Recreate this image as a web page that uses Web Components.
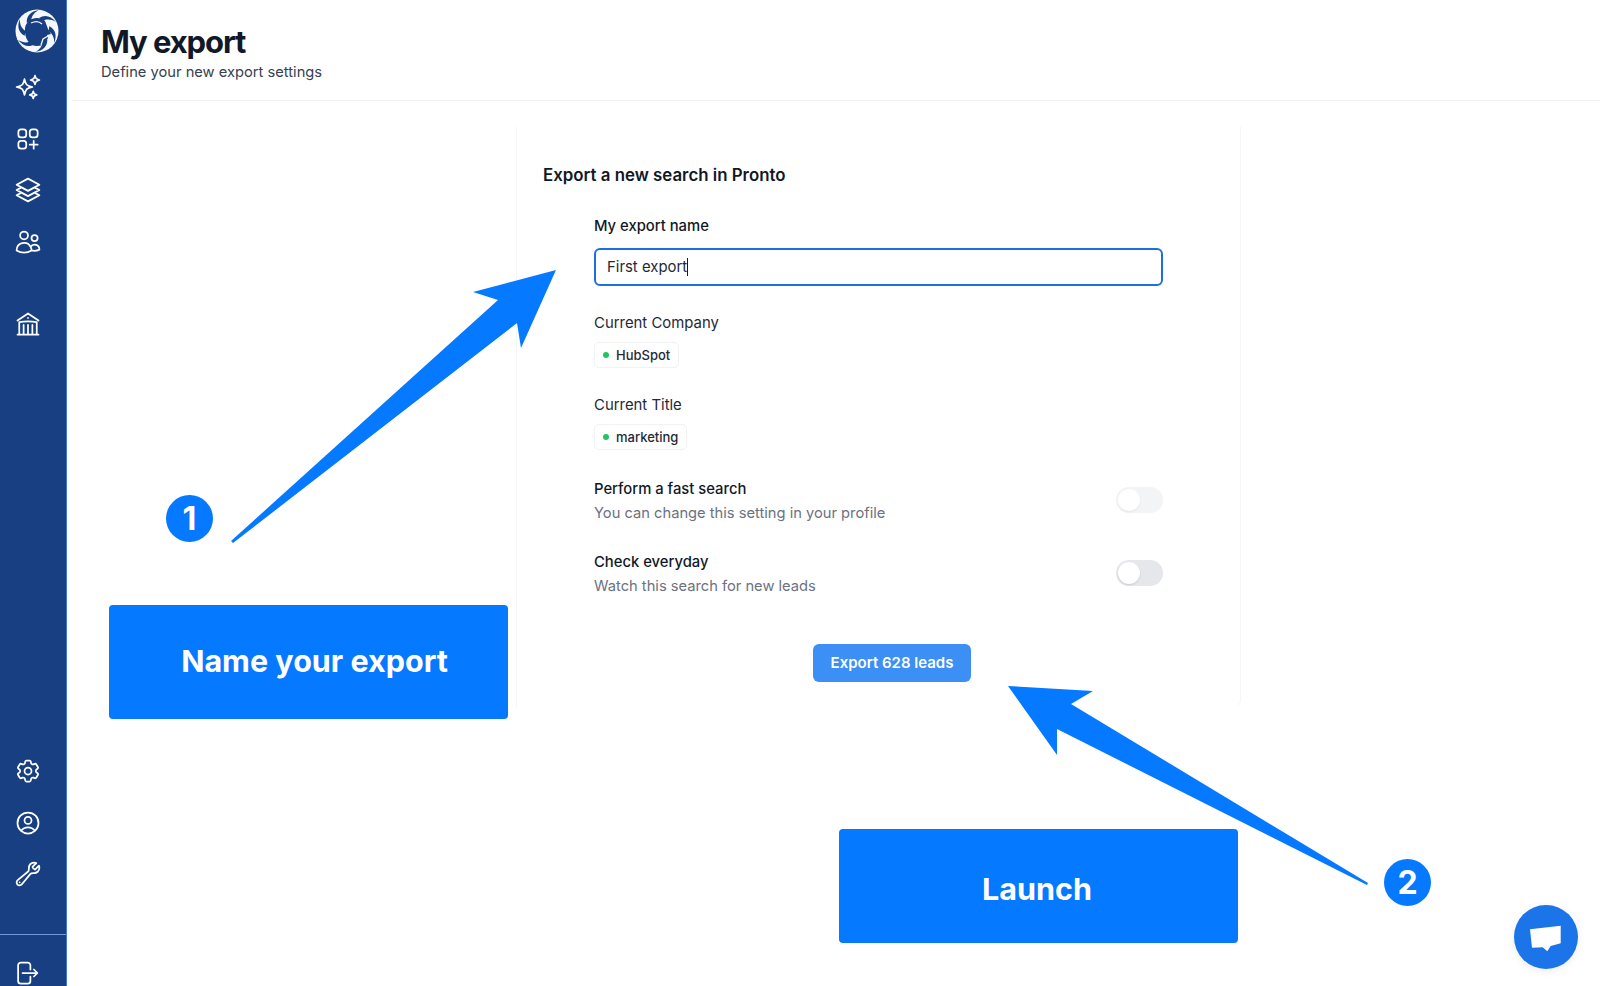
<!DOCTYPE html>
<html lang="en">
<head>
<meta charset="utf-8">
<title>My export</title>
<style>
  html, body { margin: 0; height: 100%; }
  body { font-family: Inter, "Liberation Sans", sans-serif; color: #111827; background: #fff; overflow: hidden; }
</style>
</head>
<body>
<pr-app>
  <pr-sidebar slot="sidebar"></pr-sidebar>
  <pr-header slot="header" heading="My export" sub="Define your new export settings"></pr-header>
  <pr-export-card slot="content" heading="Export a new search in Pronto">
    <pr-field label="My export name" strong><pr-text-input value="First export"></pr-text-input></pr-field>
    <pr-field label="Current Company"><pr-chip>HubSpot</pr-chip></pr-field>
    <pr-field label="Current Title"><pr-chip>marketing</pr-chip></pr-field>
    <pr-switch-row label="Perform a fast search" hint="You can change this setting in your profile" faded></pr-switch-row>
    <pr-switch-row label="Check everyday" hint="Watch this search for new leads"></pr-switch-row>
    <pr-button>Export 628 leads</pr-button>
  </pr-export-card>
</pr-app>

<pr-arrows></pr-arrows>
<pr-callout style="left:109px;top:605px;--dx:6px;--dy:-2.5px">Name your export</pr-callout>
<pr-callout style="left:839px;top:829px;--dx:-1.5px;--dy:2px">Launch</pr-callout>
<pr-badge style="left:166px;top:495px">1</pr-badge>
<pr-badge style="left:1384px;top:859px">2</pr-badge>
<pr-chat></pr-chat>

<script>
const ICONS = {
  sparkles: 'M9.813 15.904L9 18.75l-.813-2.846a4.5 4.5 0 00-3.09-3.09L2.25 12l2.846-.813a4.5 4.5 0 003.09-3.09L9 5.25l.813 2.846a4.5 4.5 0 003.09 3.09L15.75 12l-2.846.813a4.5 4.5 0 00-3.09 3.09zM18.259 8.715L18 9.75l-.259-1.035a3.375 3.375 0 00-2.455-2.456L14.25 6l1.036-.259a3.375 3.375 0 002.455-2.456L18 2.25l.259 1.035a3.375 3.375 0 002.456 2.456L21.75 6l-1.035.259a3.375 3.375 0 00-2.456 2.456zM16.894 20.567L16.5 21.75l-.394-1.183a2.25 2.25 0 00-1.423-1.423L13.5 18.75l1.183-.394a2.25 2.25 0 001.423-1.423l.394-1.183.394 1.183a2.25 2.25 0 001.423 1.423l1.183.394-1.183.394a2.25 2.25 0 00-1.423 1.423z',
  squares: 'M13.5 16.875h3.375m0 0h3.375m-3.375 0V13.5m0 3.375v3.375M6 10.5h2.25a2.25 2.25 0 002.25-2.25V6a2.25 2.25 0 00-2.25-2.25H6A2.25 2.25 0 003.75 6v2.25A2.25 2.25 0 006 10.5zm0 9.75h2.25A2.25 2.25 0 0010.5 18v-2.25a2.25 2.25 0 00-2.25-2.25H6a2.25 2.25 0 00-2.25 2.25V18A2.25 2.25 0 006 20.25zm9.75-9.75H18a2.25 2.25 0 002.25-2.25V6A2.25 2.25 0 0018 3.75h-2.25A2.25 2.25 0 0013.5 6v2.25a2.25 2.25 0 002.25 2.25z',
  stack: 'M6.429 9.75L2.25 12l4.179 2.25m0-4.5l5.571 3 5.571-3m-11.142 0L2.25 7.5 12 2.25l9.75 5.25-4.179 2.25m0 0L21.75 12l-4.179 2.25m0 0l4.179 2.25L12 21.75 2.25 16.5l4.179-2.25m11.142 0l-5.571 3-5.571-3',
  users: 'M15 19.128a9.38 9.38 0 002.625.372 9.337 9.337 0 004.121-.952 4.125 4.125 0 00-7.533-2.493M15 19.128v-.003c0-1.113-.285-2.16-.786-3.07M15 19.128v.106A12.318 12.318 0 018.624 21c-2.331 0-4.512-.645-6.374-1.766l-.001-.109a6.375 6.375 0 0111.964-3.07M12 6.375a3.375 3.375 0 11-6.75 0 3.375 3.375 0 016.75 0zm8.25 2.25a2.625 2.625 0 11-5.25 0 2.625 2.625 0 015.25 0z',
  bank: 'M12 21v-8.25M15.75 21v-8.25M8.25 21v-8.25M3 9l9-6 9 6m-1.5 12V10.332A48.36 48.36 0 0012 9.75c-2.551 0-5.056.2-7.5.582V21M3 21h18M12 6.75h.008v.008H12V6.75z',
  cog: 'M9.594 3.94c.09-.542.56-.94 1.11-.94h2.593c.55 0 1.02.398 1.11.94l.213 1.281c.063.374.313.686.645.87.074.04.147.083.22.127.324.196.72.257 1.075.124l1.217-.456a1.125 1.125 0 011.37.49l1.296 2.247a1.125 1.125 0 01-.26 1.431l-1.003.827c-.293.24-.438.613-.431.992a6.759 6.759 0 010 .255c-.007.378.138.75.43.99l1.005.828c.424.35.534.954.26 1.43l-1.298 2.247a1.125 1.125 0 01-1.369.491l-1.217-.456c-.355-.133-.75-.072-1.076.124a6.57 6.57 0 01-.22.128c-.331.183-.581.495-.644.869l-.213 1.28c-.09.543-.56.941-1.11.941h-2.594c-.55 0-1.02-.398-1.11-.94l-.213-1.281c-.062-.374-.312-.686-.644-.87a6.52 6.52 0 01-.22-.127c-.325-.196-.72-.257-1.076-.124l-1.217.456a1.125 1.125 0 01-1.369-.49l-1.297-2.247a1.125 1.125 0 01.26-1.431l1.004-.827c.292-.24.437-.613.43-.992a6.932 6.932 0 010-.255c.007-.378-.138-.75-.43-.99l-1.004-.828a1.125 1.125 0 01-.26-1.43l1.297-2.247a1.125 1.125 0 011.37-.491l1.216.456c.356.133.751.072 1.076-.124.072-.044.146-.087.22-.128.332-.183.582-.495.644-.869l.214-1.281zM15 12a3 3 0 11-6 0 3 3 0 016 0z',
  account: 'M17.982 18.725A7.488 7.488 0 0012 15.75a7.488 7.488 0 00-5.982 2.975m11.963 0a9 9 0 10-11.963 0m11.963 0A8.966 8.966 0 0112 21a8.966 8.966 0 01-5.982-2.275M15 9.75a3 3 0 11-6 0 3 3 0 016 0z',
  wrench: 'M21.75 6.75a4.5 4.5 0 01-4.884 4.484c-1.076-.091-2.264.071-2.95.904l-7.152 8.684a2.548 2.548 0 11-3.586-3.586l8.684-7.152c.833-.686.995-1.874.904-2.95a4.5 4.5 0 016.336-4.486l-3.276 3.276a3.004 3.004 0 002.25 2.25l3.276-3.276c.278.621.398 1.247.398 1.852zM4.867 19.125h.008v.008h-.008v-.008z',
  logout: 'M15.75 9V5.25A2.25 2.25 0 0013.5 3h-6a2.25 2.25 0 00-2.25 2.25v13.5A2.25 2.25 0 007.5 21h6a2.25 2.25 0 002.25-2.25V15m3 0l3-3m0 0l-3-3m3 3H9'
};

// small helper, every element below has the same shadow setup
class Base extends HTMLElement {
  render(html) {
    if (!this.shadowRoot) this.attachShadow({ mode: 'open' });
    this.shadowRoot.innerHTML = html;
  }
}

class PrApp extends Base {
  connectedCallback() {
    this.render(`
      <style>
        :host { display: flex; height: 986px; }
        main { flex: 1; min-width: 0; display: flex; flex-direction: column; }
      </style>
      <slot name="sidebar"></slot>
      <main>
        <slot name="header"></slot>
        <slot name="content"></slot>
      </main>`);
  }
}

class PrSidebar extends Base {
  connectedCallback() {
    const item = name => `<a><svg viewBox="0 0 24 24" fill="none" stroke="currentColor" stroke-width="1.5" stroke-linecap="round" stroke-linejoin="round"><path d="${ICONS[name]}"/></svg></a>`;
    // aperture blades of the logo, one slit turned six times
    const slits = [0, 60, 120, 180, 240, 300].map(a => `<path transform="rotate(${a} 22 22)" d="M24 9C30 5 36 7 41 13C36 10 31 10 28 12Z"/>`).join('');
    this.render(`
      <style>
        :host { display: flex; flex-direction: column; flex: none; width: 66px; height: 986px; background: #173f82; border-right: 1px solid #3f77d0; color: #fff; overflow: hidden; }
        .logo { display: block; width: 44px; height: 44px; margin: 9px 0 0 15px; flex: none; }
        nav { display: flex; flex-direction: column; gap: 23.5px; padding-left: 14px; }
        .top { margin-top: 20px; }
        .bank { margin-top: 54px; }
        .spacer { flex: 1; }
        .divider { height: 1px; background: #6f9ae0; margin-top: 46px; flex: none; }
        .out { margin-top: 24px; height: 27px; padding-left: 12px; }
        a { display: block; width: 28px; height: 28px; }
        svg { display: block; width: 28px; height: 28px; }
      </style>
      <svg class="logo" viewBox="0 0 44 44">
        <circle cx="22" cy="22" r="21.5" fill="#f4f7fc"/>
        <g fill="#173f82">${slits}
          <path d="M10 19C11 13 16 9 22 9C25 9 28 10 30 12L33 20L36 25L32 26L33 29L29 35C27 36 25 37 22 37C15 37 9 30 10 19Z"/>
        </g>
        <path fill="none" stroke="#f4f7fc" stroke-width="1.3" d="M16 14C20 12 24 12 27 15M33 27L28 30L26 36"/>
      </svg>
      <nav class="top">${item('sparkles')}${item('squares')}${item('stack')}${item('users')}</nav>
      <nav class="bank">${item('bank')}</nav>
      <div class="spacer"></div>
      <nav>${item('cog')}${item('account')}${item('wrench')}</nav>
      <div class="divider"></div>
      <nav class="out">${item('logout')}</nav>`);
  }
}

class PrHeader extends Base {
  connectedCallback() {
    this.render(`
      <style>
        :host { display: block; height: 100px; border-bottom: 1px solid #f0f1f3; margin-left: 5px; padding-left: 29px; }
        h1 { margin: 0; padding-top: 23px; font-size: 31px; line-height: 38px; font-weight: 700; letter-spacing: -1.1px; color: #111827; }
        p { margin: 1px 0 0; font-size: 14.7px; line-height: 20px; color: #374151; }
      </style>
      <h1>${this.getAttribute('heading')}</h1>
      <p>${this.getAttribute('sub')}</p>`);
  }
}

class PrExportCard extends Base {
  connectedCallback() {
    this.render(`
      <style>
        :host { display: block; box-sizing: border-box; width: 725px; height: 581px; margin: 26px 0 0 449px; padding: 37px 77px 0 26px; border-left: 1px solid #f5f6f7; border-right: 1px solid #f5f6f7; border-bottom: 1px solid transparent; border-bottom-right-radius: 8px; }
        h2 { margin: 0; font-size: 16.85px; line-height: 22px; font-weight: 600; color: #111827; }
        .body { display: flex; flex-direction: column; padding-left: 51px; margin-top: 30px; }
      </style>
      <h2>${this.getAttribute('heading')}</h2>
      <div class="body"><slot></slot></div>`);
  }
}

class PrField extends Base {
  connectedCallback() {
    const strong = this.hasAttribute('strong');
    this.render(`
      <style>
        :host { display: flex; flex-direction: column; align-items: flex-start; gap: 11px; margin-bottom: 27px; }
        label { font-size: ${strong ? 14.8 : 14.9}px; line-height: 20px; font-weight: ${strong ? 450 : 400}; color: ${strong ? '#111827' : '#1f2937'}; }
      </style>
      <label>${this.getAttribute('label')}</label>
      <slot></slot>`);
  }
}

class PrTextInput extends Base {
  connectedCallback() {
    this.render(`
      <style>
        :host { display: flex; align-items: center; align-self: stretch; box-sizing: border-box; height: 38px; margin-top: 1px; padding: 0 0 1px 11px; border: 2px solid #1d6fe0; border-radius: 6px; font-size: 14.9px; color: #1f2937; background: #fff; }
        i { display: block; width: 1px; height: 18px; background: #111827; }
      </style>
      <span>${this.getAttribute('value')}</span><i></i>`);
  }
}

class PrChip extends Base {
  connectedCallback() {
    this.render(`
      <style>
        :host { display: inline-flex; align-items: center; gap: 7px; box-sizing: border-box; height: 26px; margin-top: -2px; padding: 0 8px; border: 1px solid #f1f2f4; border-radius: 5px; font-size: 13px; font-weight: 500; color: #1f2937; background: #fff; }
        i { width: 6px; height: 6px; border-radius: 50%; background: #22c55e; }
      </style>
      <i></i><slot></slot>`);
  }
}

class PrSwitchRow extends Base {
  connectedCallback() {
    this.render(`
      <style>
        :host { display: flex; justify-content: space-between; align-items: flex-start; margin-bottom: 29.5px; }
        :host([faded]) { margin-top: 1.5px; }
        b { display: block; font-size: 14.8px; line-height: 20px; font-weight: 450; color: #111827; }
        span { display: block; margin-top: 4px; font-size: 14.7px; line-height: 20px; color: #6b7280; }
        .track { width: 47px; height: 26px; margin-top: 8px; border-radius: 13px; background: #e5e7eb; display: flex; align-items: center; padding: 2px; box-sizing: border-box; }
        .knob { width: 22px; height: 22px; border-radius: 50%; background: #fff; box-shadow: 0 1px 2px rgba(0,0,0,.12); }
        .faded { opacity: .45; }
      </style>
      <div><b>${this.getAttribute('label')}</b><span>${this.getAttribute('hint')}</span></div>
      <div class="track ${this.hasAttribute('faded') ? 'faded' : ''}"><div class="knob"></div></div>`);
  }
}

class PrButton extends Base {
  connectedCallback() {
    this.render(`
      <style>
        :host { display: flex; align-items: center; justify-content: center; align-self: flex-start; width: 158px; height: 38px; margin: 18px 0 0 219px; border-radius: 6px; background: #3b8ff5; color: #fff; font-size: 15px; font-weight: 600; }
      </style>
      <slot></slot>`);
  }
}

class PrCallout extends Base {
  connectedCallback() {
    this.render(`
      <style>
        :host { position: absolute; display: flex; align-items: center; justify-content: center; width: 399px; height: 114px; border-radius: 4px; background: #0579ff; color: #fff; font-size: 30.5px; font-weight: 700; }
        span { transform: translate(var(--dx, 0), var(--dy, 0)); }
      </style>
      <span><slot></slot></span>`);
  }
}

class PrBadge extends Base {
  connectedCallback() {
    this.render(`
      <style>
        :host { position: absolute; display: flex; align-items: center; justify-content: center; width: 47px; height: 47px; border-radius: 50%; background: #0579ff; color: #fff; font-size: 32px; font-weight: 700; }
      </style>
      <slot></slot>`);
  }
}

class PrArrows extends Base {
  connectedCallback() {
    this.render(`
      <style>
        :host { position: absolute; left: 0; top: 0; width: 1600px; height: 986px; pointer-events: none; }
        svg { display: block; }
      </style>
      <svg width="1600" height="986" viewBox="0 0 1600 986">
        <polygon fill="#0579ff" points="556,270 473,292 498,300 231,541 233,543 517,323 521,348"/>
        <polygon fill="#0579ff" points="1008,686 1093,691 1071,704 1368,883 1367,885 1057,729 1057,755"/>
      </svg>`);
  }
}

class PrChat extends Base {
  connectedCallback() {
    this.render(`
      <style>
        :host { position: absolute; left: 1514px; top: 905px; width: 64px; height: 64px; border-radius: 50%; background: #1b74e8; box-shadow: 0 2px 8px rgba(0,0,0,.08); }
        svg { display: block; }
      </style>
      <svg width="64" height="64" viewBox="0 0 64 64">
        <polygon fill="#fff" points="16,24.3 46.7,20.7 46.7,38.3 36.7,41 33.3,46.3 28.7,42.3 18,42.7"/>
      </svg>`);
  }
}

customElements.define('pr-app', PrApp);
customElements.define('pr-sidebar', PrSidebar);
customElements.define('pr-header', PrHeader);
customElements.define('pr-export-card', PrExportCard);
customElements.define('pr-field', PrField);
customElements.define('pr-text-input', PrTextInput);
customElements.define('pr-chip', PrChip);
customElements.define('pr-switch-row', PrSwitchRow);
customElements.define('pr-button', PrButton);
customElements.define('pr-callout', PrCallout);
customElements.define('pr-badge', PrBadge);
customElements.define('pr-arrows', PrArrows);
customElements.define('pr-chat', PrChat);
</script>
</body>
</html>
